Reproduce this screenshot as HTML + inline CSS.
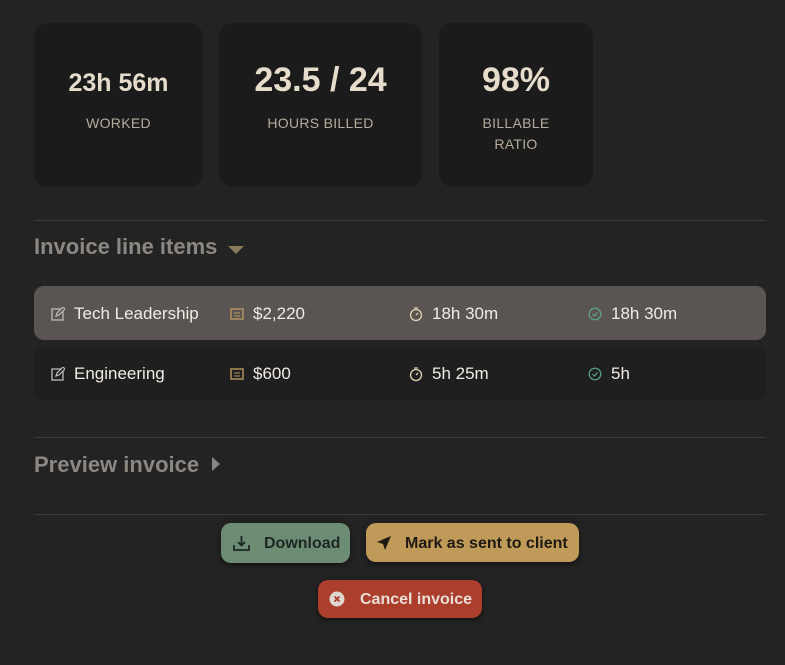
<!DOCTYPE html>
<html><head><meta charset="utf-8"><style>
body{margin:0;background:#232323;width:785px;height:665px;overflow:hidden;font-family:"Liberation Sans",sans-serif;position:relative}
.card{position:absolute;top:23px;height:164px;background:#1b1b1b;border-radius:14px;text-align:center;color:#e6dccb}
.v{position:absolute;left:0;right:0;font-weight:bold}
.l{position:absolute;left:0;right:0;font-size:14px;color:#b5ab9c;letter-spacing:.3px;line-height:21px}
.hr{position:absolute;left:34px;width:732px;height:1px;background:#3a3a3a}
.h{position:absolute;left:34px;font-size:22px;font-weight:bold;color:#8c8782}
.row{position:absolute;left:34px;width:732px;height:54px;border-radius:10px}
.t{position:absolute;top:17px;font-size:17px;color:#f0ebe3}
.i{position:absolute;top:20px}
.btn{position:absolute;border-radius:10px;font-size:16px;font-weight:bold;box-shadow:0 2px 6px rgba(0,0,0,.5)}
.btn span{position:absolute;top:11px}
</style></head><body>
<div class="card" style="left:34px;width:169px"><div class="v" style="top:46px;font-size:25px">23h 56m</div><div class="l" style="top:90px">WORKED</div></div>
<div class="card" style="left:219px;width:203px"><div class="v" style="top:38px;font-size:34px">23.5 / 24</div><div class="l" style="top:90px">HOURS BILLED</div></div>
<div class="card" style="left:439px;width:154px"><div class="v" style="top:38px;font-size:34px">98%</div><div class="l" style="top:90px">BILLABLE<br>RATIO</div></div>
<div class="hr" style="top:220px"></div>
<div class="h" style="top:234px">Invoice line items <svg width="16" height="10" style="margin-left:4px"><path d="M0 2h16L8 10z" fill="#8a7a58"/></svg></div>
<div class="row" style="top:286px;background:#5a5552"></div>
<div class="row" style="top:346px;background:#1f1f1f"></div>
<svg class="i" style="left:51px;top:307px" width="14" height="14"><rect x="1" y="2" width="11" height="11" fill="none" stroke="#bbb" stroke-width="1.3"/><path d="M5 9l1-3 6-6 2 2-6 6z" fill="#5a5552" stroke="#bbb" stroke-width="1.2"/></svg>
<div class="t" style="left:74px;top:304px">Tech Leadership</div>
<svg class="i" style="left:230px;top:308px" width="14" height="12"><rect x="1" y="1" width="12" height="10" fill="none" stroke="#b89a60" stroke-width="1.4"/><path d="M4 5h6M4 8h6" stroke="#b89a60"/></svg>
<div class="t" style="left:253px;top:304px">$2,220</div>
<svg class="i" style="left:409px;top:306px" width="14" height="16"><circle cx="7" cy="9" r="5.5" fill="none" stroke="#ddd2b0" stroke-width="1.3"/><path d="M5 2h4M7 9l2-2" stroke="#ddd2b0" stroke-width="1.3"/></svg>
<div class="t" style="left:432px;top:304px">18h 30m</div>
<svg class="i" style="left:588px;top:307px" width="14" height="14"><circle cx="7" cy="7" r="5.8" fill="none" stroke="#5aa888" stroke-width="1.2"/><path d="M4.5 7l2 2 3-3.5" fill="none" stroke="#5aa888" stroke-width="1.2"/></svg>
<div class="t" style="left:611px;top:304px">18h 30m</div>

<svg class="i" style="left:51px;top:367px" width="14" height="14"><rect x="1" y="2" width="11" height="11" fill="none" stroke="#bbb" stroke-width="1.3"/><path d="M5 9l1-3 6-6 2 2-6 6z" fill="#1f1f1f" stroke="#bbb" stroke-width="1.2"/></svg>
<div class="t" style="left:74px;top:364px">Engineering</div>
<svg class="i" style="left:230px;top:368px" width="14" height="12"><rect x="1" y="1" width="12" height="10" fill="none" stroke="#b89a60" stroke-width="1.4"/><path d="M4 5h6M4 8h6" stroke="#b89a60"/></svg>
<div class="t" style="left:253px;top:364px">$600</div>
<svg class="i" style="left:409px;top:366px" width="14" height="16"><circle cx="7" cy="9" r="5.5" fill="none" stroke="#ddd2b0" stroke-width="1.3"/><path d="M5 2h4M7 9l2-2" stroke="#ddd2b0" stroke-width="1.3"/></svg>
<div class="t" style="left:432px;top:364px">5h 25m</div>
<svg class="i" style="left:588px;top:367px" width="14" height="14"><circle cx="7" cy="7" r="5.8" fill="none" stroke="#5aa888" stroke-width="1.2"/><path d="M4.5 7l2 2 3-3.5" fill="none" stroke="#5aa888" stroke-width="1.2"/></svg>
<div class="t" style="left:611px;top:364px">5h</div>

<div class="hr" style="top:437px"></div>
<div class="h" style="top:452px">Preview invoice <svg width="10" height="16" style="margin-left:6px"><path d="M1 1v14l8-7z" fill="#8c8782"/></svg></div>
<div class="hr" style="top:514px"></div>

<div class="btn" style="left:221px;top:523px;width:129px;height:40px;background:#6d8c74;color:#1e2620">
<svg style="position:absolute;left:12px;top:12px" width="17" height="16"><path d="M8.5 1v9M5 7l3.5 3.5L12 7M1 10v5h15v-5" fill="none" stroke="#1e2620" stroke-width="1.8"/></svg><span style="left:43px;top:12px">Download</span></div>
<div class="btn" style="left:366px;top:523px;width:213px;height:39px;background:#c09a58;color:#1e1a12">
<svg style="position:absolute;left:10px;top:12px" width="16" height="16"><path d="M15 1L1 7l6 2 2 6z" fill="#1e1a12"/></svg><span style="left:39px;top:12px">Mark as sent to client</span></div>
<div class="btn" style="left:318px;top:580px;width:164px;height:38px;background:#ab3f2b;color:#eadfd8">
<svg style="position:absolute;left:11px;top:11px" width="16" height="16"><circle cx="8" cy="8" r="7.5" fill="#e0d6d0"/><path d="M5.5 5.5l5 5M10.5 5.5l-5 5" stroke="#ab3f2b" stroke-width="1.8"/></svg><span style="left:42px;top:11px">Cancel invoice</span></div>
</body></html>
